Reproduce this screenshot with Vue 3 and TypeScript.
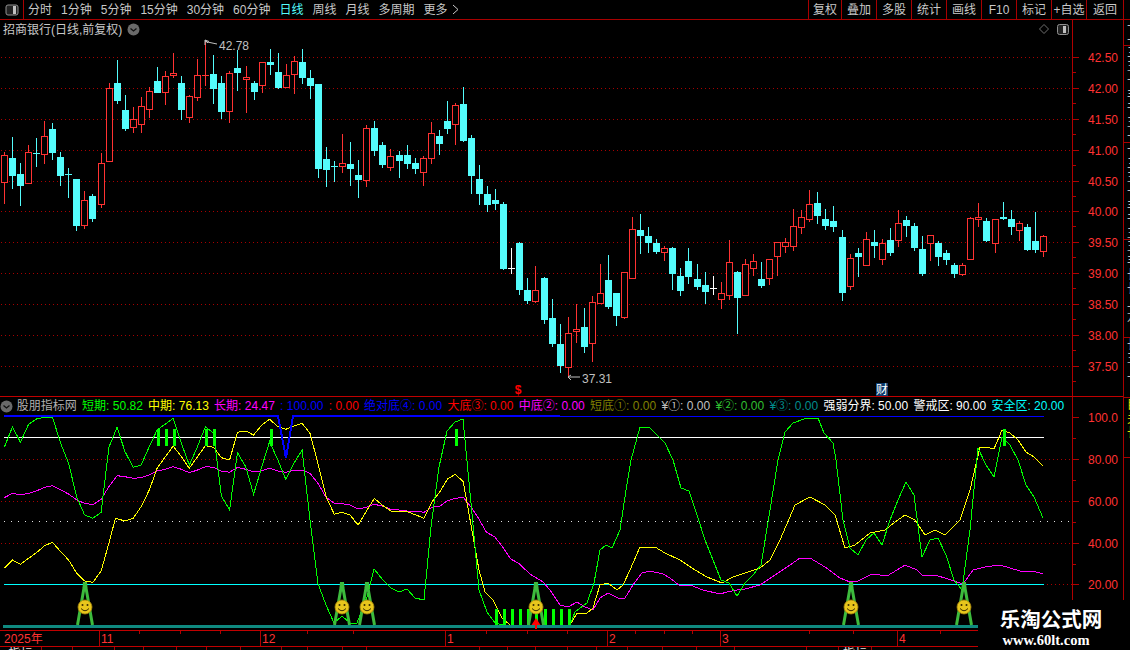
<script setup lang="ts">
type Row = [string, number, number, number, number]
const raw: Row[] = [
['r',336,346,425,491],['c',292,354,407,446],['c',370,402,437,497],['r',316,337,428,430],['c',294,338,338,380],['r',244,289,341,371],['c',250,267,339,359],['c',337,351,407,437],['c',385,403,403,473],['c',417,417,557,572],
['r',454,481,554,566],['c',463,468,537,545],['r',340,370,491,503],['r',130,145,362,365],['c',60,129,183,191],['c',166,210,267,272],['r',202,238,260,278],['r',171,199,251,278],['r',142,154,206,233],['c',82,123,159,159],
['r',94,109,155,194],['r',40,99,104,113],['c',109,129,210,239],['r',166,169,230,248],['r',58,106,170,183],['r',0,106,106,137],['c',45,102,147,191],['c',109,129,216,236],['r',94,100,212,248],['c',30,84,99,152],
['r',79,112,117,218],['c',124,129,156,179],['r',65,67,134,158],['c',27,66,75,105],['c',40,96,144,147],['r',72,106,140,144],['r',48,64,101,162],['c',27,66,114,132],['c',90,114,138,177],['c',132,132,387,414],
['c',322,357,390,440],['c',364,379,379,426],
['r',162,250,259,279],['c',186,252,267,318],['c',240,285,300,354],['r',136,145,299,320],['c',124,144,213,228],['c',186,195,255,264],['r',208,229,260,273],['c',213,225,243,294],['c',195,225,252,267],['c',234,249,267,282],
['r',228,235,275,318],['r',126,160,233,252],['c',151,168,192,225],['c',63,123,147,162],['r',69,75,131,195],['c',21,72,183,186],['c',165,174,288,342],['c',255,297,342,375],['c',318,342,375,396],['c',327,360,372,390],
['c',366,372,567,570],['w',504,563,563,582],['c',486,489,630,645],['c',594,630,663,672],['r',558,631,662,668],['c',591,594,720,732],['c',657,714,792,801],['c',732,792,858,879],['r',711,760,860,895],['r',672,748,754,789],
['c',684,741,801,819],['r',648,667,788,846],['r',552,640,668,668],['c',525,600,681,687],['c',639,639,708,738],['r',576,577,710,717],['r',411,448,593,597],['c',402,450,468,522],['c',441,468,489,519],['c',477,489,516,522],
['r',198,204,216,243],['c',201,204,282,330],['c',264,288,333,348],['c',204,243,291,312],['c',252,297,321,330],['c',276,315,336,372],['w',288,325,325,345],['r',306,340,356,387],['r',180,247,345,360],['c',273,276,354,462],
['r',237,252,345,348],['r',222,244,263,288],['c',246,297,318,324],['r',238,238,293,315],['r',186,187,227,288],['r',174,187,197,219],['r',87,139,197,213],['r',90,112,140,162],['r',30,73,116,126],['c',36,69,108,132],
['c',87,117,138,150],['c',78,123,141,156],['c',150,171,339,363],['r',222,235,317,330],['c',204,219,231,291],['r',156,178,254,255],['c',150,186,198,234],['r',178,190,236,255],['c',144,180,219,228],['r',90,130,179,201],
['c',108,120,138,171],['c',129,138,204,213],['c',168,207,282,288],['r',166,166,188,243],['c',183,189,231,258],['c',210,219,240,255],['c',249,255,282,294],['r',249,256,281,288],['r',111,115,236,237],['r',69,112,117,141],
['c',114,123,183,186],['r',118,118,188,219],['c',66,111,117,120],['c',90,117,141,165],['r',123,130,149,183],['c',132,141,210,213],['c',96,183,210,219],['r',165,169,212,231],
]
const colors: Record<string, string> = { r: '#ff3232', c: '#54fcfc', w: '#ffffff' }
const candles = raw.map((r, i) => {
  const off = i < 42 ? 40 : i < 82 ? 80 : 180
  const y = (v: number) => Math.round(off + v / 3)
  const x = Math.floor(4.4 + 8.054 * i)
  const [k, wt, bt, bb, wb] = r
  return { k, x, wt: y(wt), bt: y(bt), bb: y(bb), wb: y(wb), h: y(bb) - y(bt), color: colors[k] }
})

const z = (a: number[]) => {
  const out: number[][] = []
  for (let i = 0; i < a.length; i += 2) out.push([a[i] / 2.8, 410 + a[i + 1] / 3])
  return out
}
const p = (a: number[]) => {
  const out: number[][] = []
  for (let i = 0; i < a.length; i += 2) out.push([a[i], a[i + 1]])
  return out
}
const pts = (a: number[][]) => a.map(q => q[0].toFixed(1) + ',' + q[1].toFixed(1)).join(' ')

const green = pts([
  ...z([12,112,35,50,57,97,80,43,102,27,125,22,147,22,170,100,192,160,215,262,237,315,260,325,283,307,305,112,328,52,350,125,373,172,395,165,418,110,440,60,463,42,485,25,508,100,530,165,553,110,575,50,598,70,620,258,643,300,665,128,688,170,710,253,733,170,755,95,778,150,800,208,823,160,846,120,868,330,890,520]),
  ...p([326,605,334,623,342,616,350,623,357,623,367,597,374,569,383,580,391,588,399,592,407,589,415,598,424,600,431,527,439,467,447,431,455,422,463,419,471,503,479,590,487,612,495,623,503,625,560,625,570,625,575,612,587,603,594,583,600,550,606,545,612,548,620,530,626,490,631,460,640,427,649,427,657,435,665,443,673,460,681,488,689,491,697,515,705,540,713,560,721,580,729,583,737,596,745,583,753,575,761,565,770,510,778,460,785,432,793,423,807,418,818,418,824,433,833,443,836,460,843,520,850,548,858,555,866,540,874,533,882,545,890,520,898,500,906,482,914,495,922,557,930,540,938,538,946,555,954,580,962,590,970,530,978,448,986,465,994,477,1002,437,1010,445,1018,460,1026,485,1034,497,1043,518]),
])
const yellow = pts([
  ...z([12,475,35,450,57,463,80,445,102,428,125,407,147,397,170,425,192,450,215,490,237,513,260,517,283,483,305,400,323,325,350,333,373,325,395,290,418,240,440,175,463,140,485,108,508,140,530,175,553,140,575,107,598,112,620,143,643,150,665,67,688,63,710,75,733,45,755,28,778,50,800,58,823,48,846,40,868,70,890,160,913,260,936,313,958,307,980,315,1003,345,1025,305,1048,265,1070,285,1095,303,1117,306,1140,305,1165,315,1187,325,1210,275,1232,245,1253,207,1275,193,1297,215,1318,340]),
  ...p([479,570,485,592,493,600,502,618,510,625,570,625,577,613,587,613,593,608,600,585,608,583,617,590,623,585,630,570,640,547,655,547,665,553,680,560,695,570,707,577,722,583,733,577,745,573,760,568,770,560,780,540,795,505,810,497,825,505,835,515,845,548,855,545,870,533,885,530,895,522,905,515,915,520,925,535,935,530,945,535,960,520,970,490,980,447,986,447,994,449,1002,430,1010,433,1018,440,1026,452,1034,457,1043,466]),
])
const magenta = pts([
  ...z([12,263,35,250,57,255,80,250,102,243,125,232,147,227,170,240,192,252,215,270,237,280,260,284,283,268,305,230,328,197,350,200,373,205,395,203,418,195,440,183,463,178,485,170,508,178,530,188,553,180,575,170,598,172,620,183,643,187,665,172,688,178,710,186,733,182,755,175,778,183,800,187,823,181,846,180,868,190,890,220,913,262,936,280,958,281,980,285,1003,297,1025,292,1048,283,1070,288,1095,298,1117,300,1140,303,1165,304,1187,307,1210,292,1232,288,1253,272,1275,265,1297,262,1318,290,1340,325,1362,367,1385,380,1407,410,1430,447,1452,460]),
  ...p([530,574,543,582,550,590,560,605,568,607,577,602,585,607,593,610,600,598,608,593,618,598,625,598,633,585,642,573,650,571,663,574,670,578,680,586,690,585,703,590,720,594,727,592,737,590,745,589,760,585,775,575,790,565,800,558,810,558,825,567,840,578,850,582,858,581,872,574,887,576,897,570,905,565,917,570,923,576,935,575,948,579,963,584,973,570,985,567,1000,565,1020,571,1033,571,1043,574]),
])

const priceLines = [
  { y: 57, t: '42.50' }, { y: 88, t: '42.00' }, { y: 119, t: '41.50' }, { y: 150, t: '41.00' },
  { y: 181, t: '40.50' }, { y: 211, t: '40.00' }, { y: 242, t: '39.50' }, { y: 273, t: '39.00' },
  { y: 304, t: '38.50' }, { y: 335, t: '38.00' }, { y: 366, t: '37.50' },
]
const indLines = [
  { y: 417, t: '100.0' }, { y: 459, t: '80.00' }, { y: 501, t: '60.00' }, { y: 543, t: '40.00' }, { y: 584, t: '20.00' },
]
const darts = [157, 165, 173, 205, 213, 270, 455, 1003]
const bottoms = [495, 503, 511, 519, 527, 535, 544, 552, 560, 568]
const forks = [85, 342, 367, 536, 851, 964]

const head = [
  { t: '短期: 50.82', c: '#00ff00' }, { t: '中期: 76.13', c: '#ffff00' }, { t: '长期: 24.47', c: '#ff00ff' },
  { t: ': 100.00', c: '#0000ff' }, { t: ': 0.00', c: '#ff0000' }, { t: '绝对底④: 0.00', c: '#0000ff' },
  { t: '大底③: 0.00', c: '#ff0000' }, { t: '中底②: 0.00', c: '#ff00ff' }, { t: '短底①: 0.00', c: '#808000' },
  { t: '¥①: 0.00', c: '#c0c0c0' }, { t: '¥②: 0.00', c: '#30c030' }, { t: '¥③: 0.00', c: '#008c8c' },
  { t: '强弱分界: 50.00', c: '#ffffff' }, { t: '警戒区: 90.00', c: '#ffffff' }, { t: '安全区: 20.00', c: '#00ffff' },
]
const periods = ['分时', '1分钟', '5分钟', '15分钟', '30分钟', '60分钟', '日线', '周线', '月线', '多周期', '更多']
const buttons = ['复权', '叠加', '多股', '统计', '画线', 'F10', '标记', '+自选', '返回']
const dateMajor = [99, 260, 445, 607, 720, 897]
const dateMinor = [139, 180, 220, 307, 353, 486, 527, 567, 635, 664, 692, 809, 853, 940]
const dateText = [
  { x: 4, t: '2025年' }, { x: 101, t: '11' }, { x: 262, t: '12' }, { x: 447, t: '1' },
  { x: 609, t: '2' }, { x: 722, t: '3' }, { x: 899, t: '4' },
]
const tabs = [
  { w: 42, t: '指标' }, { w: 31, t: '' }, { w: 42, t: '' }, { w: 29, t: '' }, { w: 33, t: '' }, { w: 30, t: '' },
  { w: 34, t: '' }, { w: 41, t: '' }, { w: 26, t: '' }, { w: 35, t: '' }, { w: 24, t: '' }, { w: 113, t: '' },
  { w: 28, t: '' }, { w: 28, t: '' }, { w: 32, t: '' }, { w: 29, t: '' }, { w: 31, t: '' }, { w: 35, t: '' },
  { w: 34, t: '' }, { w: 38, t: '' }, { w: 72, t: '' }, { w: 32, t: '' }, { w: 33, t: '指标' },
]
const sideRows = [
  { h: 26, t: '十十十', c: '#c0c0c0' }, { h: 97, t: '三王十丰干王十三', c: '#c0c0c0' },
  { h: 97, t: '十三王十丰干王十', c: '#c0c0c0' }, { h: 98, t: '王丰长长上龙', c: '#c0c0c0' },
  { h: 60, t: '长王上', c: '#c0c0c0' }, { h: 60, t: '目关长', c: '#e0e000' },
]
</script>

<template>
  <div class="app">
    <header class="toolbar">
      <div class="panel-btn">
        <svg width="14" height="12" viewBox="0 0 14 12">
          <rect x="1" y="1" width="12" height="10" rx="2" fill="#222" stroke="#909090" />
          <rect x="8" y="2" width="3" height="8" fill="#c0c0c0" />
        </svg>
      </div>
      <nav class="periods">
        <span v-for="t in periods" :key="t" :class="{ active: t === '日线' }">{{ t }}</span>
        <svg class="more" width="7" height="11" viewBox="0 0 7 11"><path d="M1 1l5 4.5L1 10" fill="none" stroke="#c8c8c8" /></svg>
      </nav>
      <div class="buttons">
        <span v-for="b in buttons" :key="b" class="tbtn">{{ b }}</span>
      </div>
    </header>

    <div class="body">
      <div class="charts">
        <section class="pane-price">
          <div class="title">
            <span>招商银行(日线,前复权)</span>
            <svg width="13" height="13" viewBox="0 0 13 13"><circle cx="6.5" cy="6.5" r="6" fill="#6a6a6a" /><path d="M3.5 5.5l3 2.5 3-2.5" fill="none" stroke="#111" stroke-width="1.3" /></svg>
          </div>
          <svg class="chart" width="1123" height="376" viewBox="0 20 1123 376">
            <g shape-rendering="crispEdges">
              <line v-for="l in priceLines" :key="l.y" x1="1" x2="1072" :y1="l.y + 0.5" :y2="l.y + 0.5" class="dots" />
              <g v-for="(c, i) in candles" :key="i">
                <rect :x="c.x" :y="c.wt" width="1" :height="Math.max(c.bt - c.wt, 0)" :fill="c.color" />
                <rect :x="c.x" :y="c.bb" width="1" :height="Math.max(c.wb - c.bb, 0)" :fill="c.color" />
                <rect v-if="c.h === 0" :x="c.x - 3" :y="c.bt" width="7" height="1" :fill="c.color" />
                <rect v-else-if="c.k === 'c'" :x="c.x - 3" :y="c.bt" width="7" :height="c.h" :fill="c.color" />
                <rect v-else :x="c.x - 2.5" :y="c.bt + 0.5" width="6" :height="c.h" fill="#000" :stroke="c.color" />
              </g>
              <rect x="1072" y="20" width="1" height="376" class="axis" />
              <g v-for="l in priceLines" :key="'t' + l.y">
                <rect x="1073" :y="l.y" width="6" height="1" class="axis" />
                <rect x="1073" :y="l.y + 15" width="3" height="1" class="axis" />
              </g>
            </g>
            <text v-for="l in priceLines" :key="'p' + l.y" x="1088" :y="l.y + 5" class="axis-text">{{ l.t }}</text>
            <path d="M205 40v5M205 40l4 1.500M205 40l3 3M205 41.500l12 2.500" fill="none" stroke="#c0c0c0" />
            <text x="219" y="50" class="mark">42.78</text>
            <path d="M568 377h12M568 377l3-2M568 377l3 3" fill="none" stroke="#c0c0c0" />
            <text x="582" y="383" class="mark">37.31</text>
            <text x="518" y="394" class="dollar" text-anchor="middle">$</text>
            <rect x="876" y="383" width="12" height="13" fill="#0b3a6b" />
            <text x="876" y="394" class="cai">财</text>
            <path d="M1044 24.500l4.500 4.500-4.500 4.500-4.500-4.500z" fill="none" stroke="#707070" />
            <rect x="1057.500" y="24.500" width="11" height="10" rx="2" fill="#222" stroke="#909090" />
            <rect x="1063" y="26" width="3" height="7" fill="#c0c0c0" />
          </svg>
        </section>

        <section class="pane-ind">
          <div class="ind-head">
            <svg width="13" height="13" viewBox="0 0 13 13"><circle cx="6.5" cy="6.5" r="6" fill="#6a6a6a" /><path d="M3.5 5.500l3 2.500 3-2.500" fill="none" stroke="#111" stroke-width="1.3" /></svg>
            <span class="ind-name">股朋指标网</span>
            <span v-for="h in head" :key="h.t" :style="{ color: h.c }">{{ h.t }}</span>
          </div>
          <svg class="chart" width="1123" height="215" viewBox="0 415 1123 215">
            <g shape-rendering="crispEdges">
              <line v-for="y in [459, 501, 543]" :key="y" x1="1" x2="1072" :y1="y + 0.5" :y2="y + 0.5" class="dots" />
              <line x1="1043" x2="1072" y1="584.500" y2="584.500" class="dots" />
              <line x1="4" x2="1072" y1="521.500" y2="521.500" class="dots-white" />
              <rect x="4" y="437" width="1040" height="1" fill="#ffffff" />
              <rect x="4" y="584" width="1040" height="1" fill="#00ffff" />
              <polyline :points="magenta" class="line" stroke="#ff00ff" />
              <polyline :points="yellow" class="line" stroke="#ffff00" />
              <polyline :points="green" class="line" stroke="#00ff00" />
              <rect v-for="x in darts" :key="x" :x="x" y="429" width="3" height="17" fill="#00ff00" />
              <rect v-for="x in bottoms" :key="'b' + x" :x="x" y="609" width="3" height="17" fill="#00ff00" />
              <polyline points="4,416 278,416 286,458 293,416 560,416" class="line" stroke="#0000ff" stroke-width="2" />
              <rect x="560" y="416" width="484" height="1" fill="#0000ff" />
              <rect x="3" y="625" width="975" height="3" fill="#0f8a80" />
            </g>
            <g v-for="x in forks" :key="'f' + x">
              <path :d="`M${x - 0.5} 582L${x - 1} 588L${x - 7.5} 625M${x + 0.5} 582L${x + 1} 588L${x + 7.5} 625`" fill="none" stroke="#3dbb3d" stroke-width="3" />
              <circle :cx="x" cy="607" r="7" fill="#e8c61c" stroke="#a8880c" stroke-width="0.8" />
              <circle :cx="x - 2.5" cy="605" r="1" fill="#3a2c00" />
              <circle :cx="x + 2.5" cy="605" r="1" fill="#3a2c00" />
              <path :d="`M${x - 4} 608.500Q${x} 613 ${x + 4} 608.500`" fill="none" stroke="#3a2c00" stroke-width="1" />
            </g>
            <path d="M536 618l4.500 7h-9z" fill="#ff0000" />
            <rect x="535" y="625" width="2" height="4" fill="#ff0000" />
            <g shape-rendering="crispEdges">
              <rect x="1072" y="415" width="1" height="215" class="axis" />
              <g v-for="l in indLines" :key="'t' + l.y">
                <rect x="1073" :y="l.y" width="6" height="1" class="axis" />
                <rect v-if="l.y < 560" x="1073" :y="l.y + 21" width="3" height="1" class="axis" />
              </g>
            </g>
            <text v-for="l in indLines" :key="'i' + l.y" x="1088" :y="l.y + 5" class="axis-text">{{ l.t }}</text>
          </svg>
        </section>

        <div class="dates">
          <svg width="1123" height="15" viewBox="0 631 1123 15">
            <g shape-rendering="crispEdges">
              <rect v-for="x in dateMajor" :key="x" :x="x" y="631" width="1" height="15" class="axis" />
              <rect v-for="x in dateMinor" :key="'m' + x" :x="x" y="631" width="1" height="3" class="axis" />
            </g>
            <text v-for="d in dateText" :key="d.t" :x="d.x" y="643" class="axis-text">{{ d.t }}</text>
          </svg>
        </div>

        <div class="tabs">
          <span v-for="(tab, i) in tabs" :key="i" class="tab" :style="{ width: tab.w + 'px' }">{{ tab.t }}</span>
        </div>
      </div>

      <aside class="side">
        <div v-for="(r, i) in sideRows" :key="i" class="side-row" :style="{ height: r.h + 'px', color: r.c }">{{ r.t }}</div>
      </aside>
    </div>

    <div class="watermark">
      <strong>乐淘公式网</strong>
      <em>www.60lt.com</em>
    </div>
  </div>
</template>

<style scoped>
.app {
  position: relative;
  width: 1130px;
  height: 650px;
  overflow: hidden;
  background: #000;
  display: flex;
  flex-direction: column;
  font: 12px/1 "Liberation Sans", "Noto Sans CJK SC", sans-serif;
  color: #c8c8c8;
}
.toolbar {
  height: 19px;
  flex: none;
  display: flex;
  align-items: stretch;
  border-bottom: 1px solid #a80000;
}
.panel-btn {
  width: 23px;
  border-right: 1px solid #a80000;
  display: flex;
  align-items: center;
  justify-content: center;
}
.periods {
  display: flex;
  align-items: center;
  gap: 9px;
  padding-left: 4px;
  flex: 1;
}
.periods .active {
  color: #54fcfc;
}
.more {
  margin-left: -5px;
}
.buttons {
  display: flex;
  margin-right: 6px;
}
.tbtn {
  width: 35px;
  display: flex;
  align-items: center;
  justify-content: center;
  border-left: 1px solid #a80000;
  box-sizing: border-box;
}
.tbtn:first-child {
  width: 33px;
}
.tbtn:last-child {
  width: 38px;
  border-right: 1px solid #a80000;
}
.body {
  flex: 1;
  display: flex;
  min-height: 0;
}
.charts {
  width: 1123px;
  flex: none;
  display: flex;
  flex-direction: column;
}
.pane-price {
  position: relative;
  height: 376px;
  flex: none;
  border-bottom: 1px solid #c00000;
}
.title {
  position: absolute;
  left: 3px;
  top: 3px;
  display: flex;
  align-items: center;
  gap: 5px;
}
.chart {
  display: block;
  overflow: visible;
}
.pane-ind {
  height: 233px;
  flex: none;
}
.ind-head {
  width: 1072px;
  height: 18px;
  box-sizing: content-box;
  display: flex;
  align-items: center;
  gap: 5.300px;
  border-right: 1px solid #a80000;
  margin-right: 50px;
  white-space: nowrap;
}
.ind-head > span {
  flex: none;
}
.ind-head > svg {
  margin-right: -1.500px;
}
.ind-name {
  color: #b0b0b0;
}
.dates {
  height: 15px;
  flex: none;
  border-top: 1px solid #c00000;
  border-bottom: 1px solid #c00000;
}
.dates svg {
  display: block;
}
.tabs {
  height: 3px;
  flex: none;
  display: flex;
  overflow: hidden;
}
.tab {
  flex: none;
  box-sizing: border-box;
  border-right: 1px solid #a80000;
  text-align: center;
  color: #e0e0e0;
  line-height: 12px;
  height: 12px;
  padding-top: 1px;
}
.side {
  flex: none;
  width: 7px;
  box-sizing: border-box;
  border-left: 1px solid #a80000;
  overflow: hidden;
}
.side-row {
  box-sizing: border-box;
  width: 20px;
  padding-left: 3px;
  font-size: 12px;
  line-height: 14px;
  border-bottom: 1px solid #a80000;
  overflow: hidden;
  word-break: break-all;
}
.dots {
  stroke: #a80000;
  stroke-width: 1;
  stroke-dasharray: 1 3;
}
.dots-white {
  stroke: #e0e0e0;
  stroke-width: 1;
  stroke-dasharray: 1 6;
}
.axis {
  fill: #b00000;
}
.axis-text {
  fill: #ff3232;
  font-size: 12px;
}
.mark {
  fill: #c0c0c0;
  font-size: 12px;
}
.dollar {
  fill: #ff0000;
  font-size: 12px;
  font-weight: 700;
}
.cai {
  fill: #fff;
  font-size: 12px;
}
.line {
  fill: none;
}
.line:not([stroke-width]) {
  stroke-width: 1;
}
.watermark {
  position: absolute;
  left: 978px;
  top: 600px;
  width: 152px;
  height: 50px;
  background: #000;
  color: #fff;
  display: flex;
  flex-direction: column;
  align-items: center;
  padding-top: 6px;
  box-sizing: border-box;
  gap: 3px;
}
.watermark strong {
  font: 700 20.500px/24px "Noto Sans CJK SC", sans-serif;
  margin-left: -6px;
}
.watermark em {
  font: 700 14.500px/14px "Liberation Serif", serif;
  font-style: normal;
  margin-left: -16px;
}
</style>
